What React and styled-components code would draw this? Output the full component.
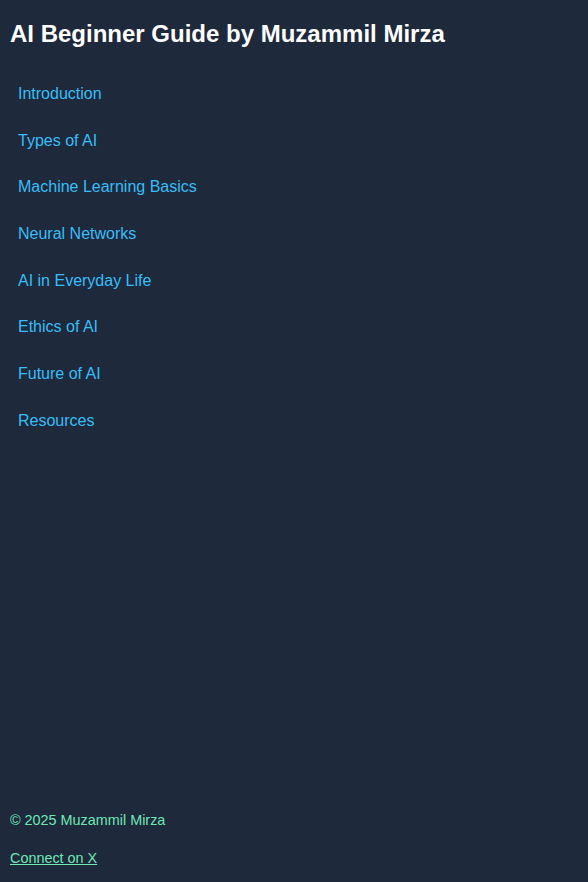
import React from "react";
import styled, { createGlobalStyle } from "styled-components";

const GlobalStyle = createGlobalStyle`
  * { box-sizing: border-box; }
  html, body {
    margin: 0;
    background: #1e293b;
    font-family: "Liberation Sans", Arial, sans-serif;
  }
`;

const sections = [
  "Introduction",
  "Types of AI",
  "Machine Learning Basics",
  "Neural Networks",
  "AI in Everyday Life",
  "Ethics of AI",
  "Future of AI",
  "Resources",
];

const App = () => {
  return (
    <>
      <GlobalStyle />
      <Sidebar>
        <Title>AI Beginner Guide by Muzammil Mirza</Title>
        <Nav>
          {sections.map((s) => (
            <NavLink key={s} href={`#${s.toLowerCase().replace(/ /g, "-")}`}>
              {s}
            </NavLink>
          ))}
        </Nav>
        <Footer>
          <FooterText>© 2025 Muzammil Mirza</FooterText>
          <FooterText>
            <FooterLink href="#x">Connect on X</FooterLink>
          </FooterText>
        </Footer>
      </Sidebar>
    </>
  );
};

export default App;

// Styled Components

const Sidebar = styled.aside`
  min-height: 100vh;
  display: flex;
  flex-direction: column;
  padding: 10px 10px 0;
  background: #1e293b;
`;

const Title = styled.h1`
  margin: 10px 0 26px;
  font-size: 24px;
  line-height: 28px;
  font-weight: 700;
  color: #ffffff;
`;

const Nav = styled.nav`
  display: flex;
  flex-direction: column;
  gap: 6.67px;
`;

const NavLink = styled.a`
  display: block;
  padding: 8px;
  font-size: 16px;
  line-height: 24px;
  color: #38bdf8;
  text-decoration: none;
`;

const Footer = styled.footer`
  margin-top: auto;
`;

const FooterText = styled.p`
  margin: 15px 0 12px;
  font-size: 14.4px;
  line-height: 23px;
  color: #6ee7b7;
`;

const FooterLink = styled.a`
  color: #6ee7b7;
  text-decoration: underline;
`;
